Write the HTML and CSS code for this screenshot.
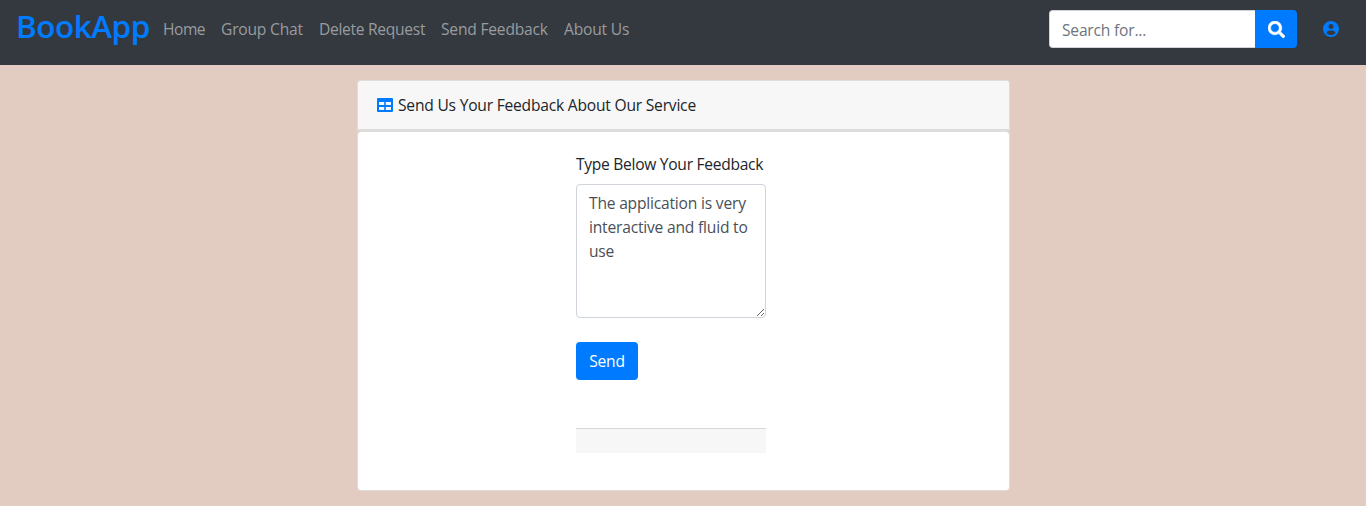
FILE: index.html
```html
<!DOCTYPE html>
<html lang="en">
<head>
<meta charset="utf-8">
<title>BookApp</title>
<link rel="stylesheet" href="styles.css">
</head>
<body>
<nav class="navbar">
  <a class="brand">BookApp</a>
  <ul class="links">
    <li class="w-home">Home</li>
    <li class="w-chat">Group Chat</li>
    <li class="w-delete">Delete Request</li>
    <li class="w-send">Send Feedback</li>
    <li class="w-about">About Us</li>
  </ul>
  <form class="search">
    <input class="search-input" type="text" placeholder="Search for...">
    <button class="search-btn" type="button" aria-label="Search">
      <svg width="17" height="17" viewBox="0 0 512 512" fill="currentColor" stroke="currentColor" stroke-width="14"><path d="M505 442.700L405.300 343c-4.500-4.500-10.600-7-17-7H372c27.600-35.300 44-79.700 44-128C416 93.100 322.900 0 208 0S0 93.100 0 208s93.100 208 208 208c48.300 0 92.700-16.400 128-44v16.300c0 6.400 2.500 12.500 7 17l99.700 99.700c9.400 9.400 24.600 9.400 33.900 0l28.300-28.300c9.400-9.400 9.400-24.600.1-34zM208 336c-70.700 0-128-57.200-128-128 0-70.700 57.200-128 128-128 70.700 0 128 57.200 128 128 0 70.700-57.200 128-128 128z"/></svg>
    </button>
  </form>
  <svg class="user" width="16" height="16" viewBox="0 0 512 512" fill="currentColor"><path fill-rule="evenodd" d="M256 0a256 256 0 1 1 0 512a256 256 0 1 1 0-512zM256 96a80 80 0 1 0 0 160a80 80 0 1 0 0-160zM216 304c-52 0-90 32-104 77c35 43 86 67 144 67s109-24 144-67c-14-45-52-77-104-77z"/></svg>
</nav>
<main class="page">
  <header class="card-header">
    <svg class="table-icon" width="16" height="14" viewBox="0 0 16 14" fill="currentColor"><path fill-rule="evenodd" d="M1 0H15Q16 0 16 1V13Q16 14 15 14H1Q0 14 0 13V1Q0 0 1 0ZM2 4V7H7.200V4ZM8.800 4V7H14V4ZM2 9V12H7.200V9ZM8.800 9V12H14V9Z"/></svg>
    <span class="title">Send Us Your Feedback About Our Service</span>
  </header>
  <section class="card">
    <div class="form">
      <label class="label" for="feedback">Type Below Your Feedback</label>
      <textarea class="feedback" id="feedback">The application is very interactive and fluid to use</textarea>
      <button class="send" type="button">Send</button>
      <div class="footer"></div>
    </div>
  </section>
</main>
</body>
</html>
```
FILE: styles.css
```css
* { box-sizing: border-box; }
body {
  margin: 0;
  height: 506px;
  overflow: hidden;
  background: #e2ccc1;
  color: #212529;
  font: 15.6px/24px "Open Sans", "Noto Sans", sans-serif;
  letter-spacing: -0.2px;
}
.navbar {
  display: flex;
  align-items: flex-start;
  height: 65px;
  padding: 10px 27px 0 16px;
  background: #33393f;
}
.brand {
  width: 147px;
  margin-top: -8px;
  color: #007bff;
  font-size: 31.5px;
  font-weight: 600;
  line-height: 48px;
  letter-spacing: -0.5px;
  white-space: nowrap;
}
.links {
  display: flex;
  gap: 16px;
  margin: 7px 0 0;
  padding: 0;
  list-style: none;
  color: #999c9f;
  white-space: nowrap;
}
.w-home { width: 42px; letter-spacing: -0.5px; }
.w-chat { width: 82px; }
.w-delete { width: 106px; letter-spacing: -0.3px; }
.w-send { width: 107px; }
.w-about { width: 67px; }
.search { display: flex; margin-left: auto; }
.search-input {
  width: 206px;
  height: 38px;
  padding: 1px 12px 0;
  border: 1px solid #ced4da;
  border-right: 0;
  border-radius: 4px 0 0 4px;
  background: #fff;
  font: inherit;
  letter-spacing: inherit;
}
.search-input::placeholder { color: #6c757d; opacity: 1; }
.search-btn {
  display: flex;
  align-items: center;
  justify-content: center;
  width: 42px;
  height: 38px;
  padding: 0;
  border: 0;
  border-radius: 0 4px 4px 0;
  background: #007bff;
  color: #fff;
}
.user { margin: 11px 0 0 26px; color: #007bff; }
.page { width: 653px; margin: 15px 0 0 357px; }
.card-header {
  display: flex;
  align-items: center;
  height: 51px;
  padding: 0 20px 1px;
  border: 1px solid #dfdcda;
  border-bottom: 2px solid #dcdcdc;
  border-radius: 4px 4px 0 0;
  background: #f7f7f7;
}
.table-icon { flex: none; margin: 0 5px 0 -1px; color: #007bff; }
.title { white-space: nowrap; letter-spacing: -0.21px; }
.card {
  height: 360px;
  padding: 20px 0 0 218px;
  border: 1px solid #dfdcda;
  border-radius: 4px;
  background: #fff;
}
.form { display: flex; flex-direction: column; align-items: flex-start; width: 190px; }
.label { margin-bottom: 8px; white-space: nowrap; letter-spacing: -0.29px; }
.feedback {
  width: 190px;
  height: 134px;
  padding: 6px 12px;
  border: 1px solid #ced4da;
  border-radius: 4px;
  color: #495057;
  font: inherit;
  letter-spacing: inherit;
  resize: both;
  overflow: auto;
}
.send {
  width: 62px;
  height: 38px;
  margin-top: 24px;
  padding: 0;
  border: 0;
  border-radius: 4px;
  background: #007bff;
  color: #fff;
  font: inherit;
  letter-spacing: inherit;
}
.footer {
  width: 190px;
  height: 25px;
  margin-top: 48px;
  border-top: 1px solid #d8d8d8;
  background: #f7f7f7;
}
```
